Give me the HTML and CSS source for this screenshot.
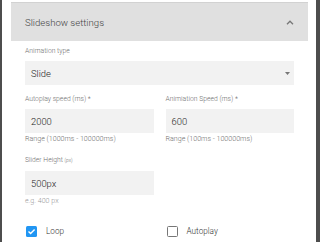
FILE: index.html
```html
<!DOCTYPE html>
<html>
<head>
<meta charset="utf-8">
<link rel="stylesheet" href="styles.css">
</head>
<body>
<div class="sheet">
  <div class="panel-head">
    <span class="panel-title">Slideshow settings</span>
    <svg class="chevron" width="8" height="5" viewBox="0 0 8 5"><path d="M1 4.2 L4 1.2 L7 4.2" fill="none" stroke="#777" stroke-width="1.3"/></svg>
  </div>
  <div class="content">
    <div class="field">
      <div class="label">Animation type</div>
      <div class="input select"><span>Slide</span><svg width="5" height="3" viewBox="0 0 5 3"><path d="M0 0 H5 L2.5 3 Z" fill="#777"/></svg></div>
    </div>
    <div class="grid row2">
      <div class="field">
        <div class="label">Autoplay speed (ms) *</div>
        <div class="input">2000</div>
        <div class="help">Range (1000ms - 100000ms)</div>
      </div>
      <div class="field">
        <div class="label">Animiation Speed (ms) *</div>
        <div class="input">600</div>
        <div class="help">Range (100ms - 100000ms)</div>
      </div>
    </div>
    <div class="grid row3">
      <div class="field">
        <div class="label">Slider Height <small>(px)</small></div>
        <div class="input">500px</div>
        <div class="help light">e.g. 400 px</div>
      </div>
    </div>
    <div class="grid checks">
      <label class="check"><span class="box on"><svg width="11" height="11" viewBox="0 0 11 11"><path d="M2.5 5.6 L4.6 7.6 L8.6 3.4" fill="none" stroke="#fff" stroke-width="1.4"/></svg></span>Loop</label>
      <label class="check"><span class="box"></span>Autoplay</label>
    </div>
  </div>
</div>
</body>
</html>
```
FILE: styles.css
```css
html, body {
  margin: 0;
  padding: 0;
}
body {
  background: #4d4d4d;
  width: 320px;
  height: 242px;
  overflow: hidden;
  font-family: Roboto, "Liberation Sans", sans-serif;
}
.sheet {
  margin: 0 4px 0 2px;
  height: 242px;
  background: #fff;
  padding-top: 2px;
  box-sizing: border-box;
}
.panel-head {
  margin: 0 8px 0 9px;
  height: 39px;
  box-sizing: border-box;
  border-top: 1px solid #d2d2d2;
  background: #e0e0e0;
  display: flex;
  align-items: center;
  justify-content: space-between;
  padding: 0 14px 0 14px;
}
.panel-title {
  font-size: 9.6px;
  font-weight: 300;
  color: #444;
}
.chevron {
  display: block;
}
.content {
  padding: 5px 22px 0 23px;
}
.label {
  font-size: 6.8px;
  font-weight: 300;
  line-height: 10px;
  color: #707070;
  margin-bottom: 5px;
  white-space: nowrap;
}
.label small {
  font-size: 4.8px;
}
.input {
  height: 24px;
  background: #f2f2f2;
  display: flex;
  align-items: center;
  padding: 0 6px;
  font-size: 9.4px;
  font-weight: 300;
  color: #222;
}
.select {
  justify-content: space-between;
  padding-right: 4px;
}
.select svg {
  display: block;
}
.help {
  font-size: 7.1px;
  font-weight: 300;
  line-height: 10px;
  color: #707070;
  margin-top: 1px;
  white-space: nowrap;
}
.help.light {
  color: #999;
}
.grid {
  display: grid;
  grid-template-columns: 1fr 1fr;
  column-gap: 12px;
}
.row2 {
  margin-top: 9px;
}
.row3 {
  margin-top: 11px;
}
.checks {
  margin-top: 19px;
}
.check {
  display: flex;
  align-items: center;
  height: 12px;
  font-size: 8.2px;
  font-weight: 300;
  color: #333;
  padding-left: 1px;
}
.box {
  width: 11px;
  height: 11px;
  box-sizing: border-box;
  border: 1.5px solid #777;
  border-radius: 1.5px;
  margin-right: 9px;
  display: flex;
}
.box.on {
  background: #2196f3;
  border: none;
}
.box svg {
  display: block;
}
```
